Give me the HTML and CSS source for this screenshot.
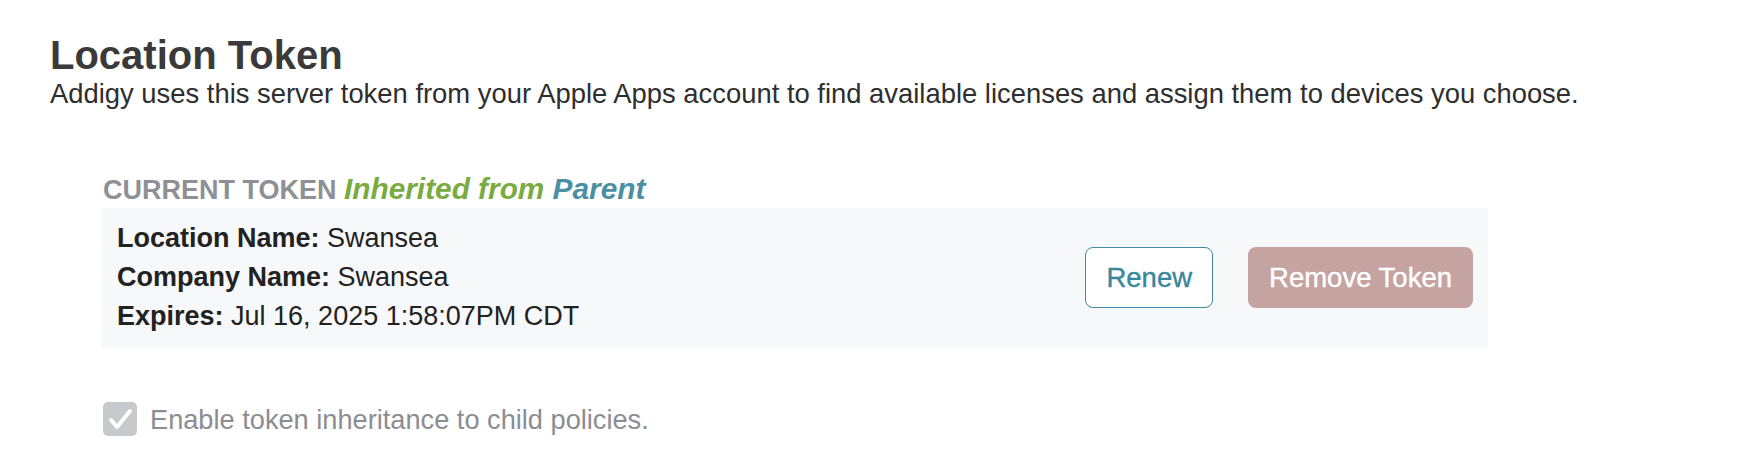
FILE: index.html
```html
<!DOCTYPE html>
<html lang="en">
<head>
<meta charset="utf-8">
<title>Location Token</title>
<link rel="stylesheet" href="styles.css">
</head>
<body>
<main class="page">
  <h1 class="title">Location Token</h1>
  <p class="intro">Addigy uses this server token from your Apple Apps account to find available licenses and assign them to devices you choose.</p>

  <section class="token">
    <div class="token-label">CURRENT TOKEN <em class="inherited">Inherited from <span class="parent">Parent</span></em></div>
    <div class="token-panel">
      <div class="token-info">
        <div class="row"><strong>Location Name:</strong> Swansea</div>
        <div class="row"><strong>Company Name:</strong> Swansea</div>
        <div class="row"><strong>Expires:</strong> Jul 16, 2025 1:58:07PM CDT</div>
      </div>
      <div class="token-actions">
        <button class="btn btn-outline" type="button">Renew</button>
        <button class="btn btn-danger" type="button">Remove Token</button>
      </div>
    </div>

    <label class="check-row">
      <span class="checkbox">
        <svg viewBox="0 0 34 34" width="34" height="34" aria-hidden="true"><polyline points="8,18 14,25 27,9" fill="none" stroke="#ffffff" stroke-width="4" stroke-linecap="round" stroke-linejoin="round"/></svg>
      </span>
      <span class="check-text">Enable token inheritance to child policies.</span>
    </label>
  </section>
</main>
</body>
</html>
```

FILE: styles.css
```css
* { box-sizing: border-box; }

html, body {
  margin: 0;
  padding: 0;
  background: #ffffff;
}

body {
  font-family: "Liberation Sans", Arial, Helvetica, sans-serif;
  color: #2b2b2b;
}

.page {
  padding: 32px 0 0 50px;
}

.title {
  margin: 0;
  font-size: 40px;
  line-height: 46px;
  font-weight: 700;
  color: #3a3a3a;
}

.intro {
  margin: 0;
  font-size: 27.4px;
  line-height: 31px;
  color: #2e2e2e;
}

.token {
  margin: 64px 0 0 52px;
  width: 1386px;
}

.token-label {
  font-size: 27px;
  line-height: 31px;
  font-weight: 700;
  color: #8e9095;
  padding-left: 1px;
}

.inherited {
  font-style: italic;
  font-size: 29.8px;
  color: #7aab41;
}

.parent {
  color: #4b8fa4;
}

.token-panel {
  margin-top: 2px;
  height: 140px;
  background: #f7f8fa;
  padding: 11px 15px 12px 15px;
  display: flex;
  align-items: center;
  justify-content: space-between;
}

.token-info {
  align-self: flex-start;
  font-size: 27px;
  line-height: 39px;
  color: #222222;
}

.token-info strong {
  font-weight: 700;
}

.token-actions {
  display: flex;
  align-items: center;
  gap: 35px;
}

.btn {
  font-family: "Liberation Sans", Arial, Helvetica, sans-serif;
  font-size: 27.5px;
  height: 61px;
  padding: 0 20px;
  border-radius: 8px;
  border: 1px solid transparent;
  cursor: pointer;
}

.btn-outline {
  background: #ffffff;
  border-color: #3f8ba0;
  color: #3a879c;
  -webkit-text-stroke: 0.4px #3a879c;
}

.btn-danger {
  background: #c4a3a1;
  color: #ffffff;
  -webkit-text-stroke: 0.4px #ffffff;
  padding: 0 20px;
}

.check-row {
  margin-top: 54px;
  display: flex;
  align-items: center;
  gap: 13px;
  padding-left: 1px;
}

.checkbox {
  width: 34px;
  height: 34px;
  border-radius: 5px;
  background: #c8c9cd;
  display: flex;
}

.check-text {
  font-size: 27.2px;
  line-height: 31px;
  color: #8b8d92;
}
```
